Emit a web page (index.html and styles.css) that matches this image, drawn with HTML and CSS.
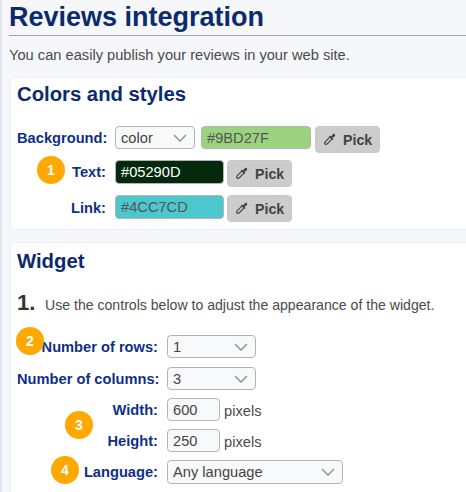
FILE: index.html
```html
<!DOCTYPE html>
<html lang="en">
<head>
<meta charset="utf-8">
<title>Reviews integration</title>
<link rel="stylesheet" href="styles.css">
</head>
<body>
<svg class="defs" width="0" height="0" aria-hidden="true">
  <symbol id="dropper" viewBox="0 0 14 14">
    <path d="M7.6 4.2 9.8 6.4 4.4 11.8 2.6 12.3 1.7 11.4 2.2 9.6Z" fill="none" stroke="currentColor" stroke-width="1.3" stroke-linejoin="round"/>
    <path d="M6.4 3.7 7.4 2.8 8.6 3.8 10.6 1.3C11.2.7 12.1.7 12.7 1.3 13.3 1.9 13.3 2.8 12.7 3.4L10.2 5.4 11.2 6.6 10.3 7.6Z" fill="currentColor"/>
  </symbol>
</svg>
<main class="page">
  <h1 class="title">Reviews integration</h1>
  <p class="intro">You can easily publish your reviews in your web site.</p>

  <section class="card card-colors">
    <h2 class="card-title">Colors and styles</h2>
    <div class="row row-bg">
      <label class="label label-colors">Background:</label>
      <span class="select select-color">color<svg class="chev" viewBox="0 0 14 8"><path d="M1 1 7 7 13 1"/></svg></span>
      <span class="swatch swatch-bg">#9BD27F</span>
      <button class="pick"><svg class="drop"><use href="#dropper"/></svg>Pick</button>
    </div>
    <div class="row row-text">
      <span class="badge badge-1">1</span>
      <label class="label label-colors">Text:</label>
      <span class="swatch swatch-text">#05290D</span>
      <button class="pick"><svg class="drop"><use href="#dropper"/></svg>Pick</button>
    </div>
    <div class="row row-link">
      <label class="label label-colors">Link:</label>
      <span class="swatch swatch-link">#4CC7CD</span>
      <button class="pick"><svg class="drop"><use href="#dropper"/></svg>Pick</button>
    </div>
  </section>

  <section class="card card-widget">
    <h2 class="card-title card-title-widget">Widget</h2>
    <p class="step"><strong class="step-num">1.</strong><span>Use the controls below to adjust the appearance of the widget.</span></p>
    <div class="row row-w row-rows">
      <span class="badge badge-2">2</span>
      <label class="label label-widget">Number of rows:</label>
      <span class="select select-num">1<svg class="chev" viewBox="0 0 14 8"><path d="M1 1 7 7 13 1"/></svg></span>
    </div>
    <div class="row row-w row-cols">
      <label class="label label-widget">Number of columns:</label>
      <span class="select select-num">3<svg class="chev" viewBox="0 0 14 8"><path d="M1 1 7 7 13 1"/></svg></span>
    </div>
    <div class="row row-w row-width">
      <span class="badge badge-3">3</span>
      <label class="label label-widget">Width:</label>
      <span class="field">600</span><span class="unit">pixels</span>
    </div>
    <div class="row row-w row-height">
      <label class="label label-widget">Height:</label>
      <span class="field">250</span><span class="unit">pixels</span>
    </div>
    <div class="row row-w row-lang">
      <span class="badge badge-4">4</span>
      <label class="label label-widget">Language:</label>
      <span class="select select-lang">Any language<svg class="chev" viewBox="0 0 14 8"><path d="M1 1 7 7 13 1"/></svg></span>
    </div>
  </section>
</main>
</body>
</html>
```
FILE: styles.css
```css
* { box-sizing: border-box; }
html, body { margin: 0; height: 100%; overflow: hidden; }
body {
  background: #f6f7fa;
  font-family: "Liberation Sans", Arial, sans-serif;
  color: #444;
  width: 466px;
  height: 492px;
}
.defs { position: absolute; }
.page {
  height: 492px;
  width: 466px;
  padding: 0 0 0 7px;
  border-left: 2px solid #e2e3ee;
  overflow: hidden;
}
.title {
  margin: 0;
  padding: 2px 0 3px;
  height: 36px;
  font-size: 27px;
  line-height: 30px;
  font-weight: 700;
  color: #0b2a70;
  border-bottom: 1px solid #a3a3a3;
  white-space: nowrap;
}
.intro {
  margin: 0;
  padding-top: 11px;
  height: 41px;
  font-size: 14.67px;
  line-height: 17px;
  color: #4a4a4a;
}
.card {
  background: #fff;
  border: 1px solid #eff0f3;
  border-radius: 4px;
  margin: 0 -30px 0 1px;
  padding: 0 0 0 6px;
}
.card-colors { height: 153px; margin-bottom: 12px; }
.card-widget { height: 300px; }
.card-title {
  margin: 0;
  font-size: 20.3px;
  line-height: 24px;
  font-weight: 700;
  color: #0b2a70;
  padding-top: 4px;
  height: 48px;
}
.card-title-widget { padding-top: 6px; }
.row { display: flex; align-items: flex-start; position: relative; }
.label {
  font-size: 14.67px;
  font-weight: 700;
  color: #0f3086;
  text-align: right;
  white-space: nowrap;
  flex: none;
}
.label-colors { width: 89px; margin-right: 9px; line-height: 24px; }
.label-widget { width: 141px; margin-right: 9px; line-height: 24px; }
.row-bg { height: 34px; }
.row-text { height: 35px; }
.row-link { height: 30px; }
.row-link .label-colors { line-height: 26px; }
.select, .field, .swatch {
  display: inline-flex;
  align-items: center;
  font-size: 14.67px;
  border-radius: 4px;
  flex: none;
  white-space: nowrap;
}
.select, .field {
  background: #f8f9fb;
  border: 1px solid #b4b4b4;
  color: #444;
  padding-left: 5px;
}
.select { position: relative; }
.select-color { width: 80px; height: 23px; margin-right: 6px; }
.select-num { width: 89px; height: 23px; }
.select-lang { width: 176px; height: 24px; }
.field { width: 53px; height: 23px; }
.unit { font-size: 14.67px; line-height: 26px; color: #4a4a4a; margin-left: 4px; }
.chev {
  position: absolute;
  right: 7px;
  top: 7px;
  width: 14px;
  height: 8px;
}
.chev path { fill: none; stroke: #9a9a9a; stroke-width: 1.7; }
.swatch {
  height: 24px;
  padding-left: 5px;
  border: 1px solid #b4b4b4;
  color: #555;
}
.swatch-bg { width: 110px; height: 23px; background: #9bd27f; margin-right: 4px; }
.swatch-text { width: 109px; background: #05290d; color: #fff; margin-right: 3px; }
.swatch-link { width: 109px; background: #4cc7cd; margin-right: 3px; }
.pick {
  display: inline-flex;
  align-items: center;
  gap: 7px;
  height: 27px;
  width: 65px;
  padding: 0 0 0 7px;
  background: #cccccc;
  border: 1px solid #c8c8c8;
  border-radius: 4px;
  font-family: inherit;
  font-size: 14.2px;
  font-weight: 700;
  color: #444;
  flex: none;
}
.drop { width: 13px; height: 13px; flex: none; }
.step {
  margin: 0;
  display: flex;
  align-items: baseline;
  height: 44px;
  font-size: 14.1px;
  color: #4a4a4a;
  white-space: nowrap;
}
.step-num {
  font-size: 22px;
  line-height: 24px;
  width: 28px;
  flex: none;
  color: #333;
}
.row-rows { height: 32px; }
.row-cols { height: 31px; }
.row-width { height: 31px; }
.row-height { height: 31px; }
.row-lang { height: 30px; }
.badge {
  position: absolute;
  width: 28px;
  height: 28px;
  border-radius: 50%;
  background: #ffa800;
  color: #fff;
  font-size: 14px;
  font-weight: 700;
  display: flex;
  align-items: center;
  justify-content: center;
}
.badge-1 { left: 20px; top: -4px; }
.badge-2 { left: -1px; top: -8px; }
.badge-3 { left: 48px; top: 13px; }
.badge-4 { left: 34px; top: -4px; }
```
